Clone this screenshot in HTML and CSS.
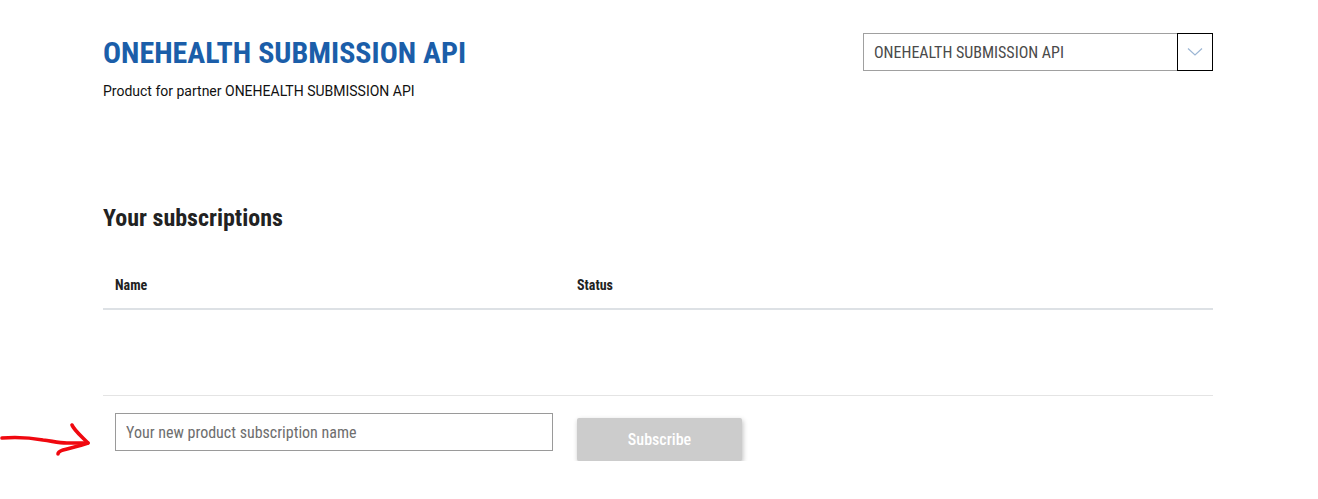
FILE: index.html
```html
<!DOCTYPE html>
<html lang="en">
<head>
<meta charset="utf-8">
<title>ONEHEALTH SUBMISSION API</title>
<link rel="stylesheet" href="styles.css">
</head>
<body>
<div class="page">
  <header class="product-header">
    <div class="product-info">
      <h1 class="product-title">ONEHEALTH SUBMISSION API</h1>
      <p class="product-desc">Product for partner ONEHEALTH SUBMISSION API</p>
    </div>
    <div class="select">
      <span class="select-value">ONEHEALTH SUBMISSION API</span>
      <span class="select-toggle">
        <svg width="16" height="10" viewBox="0 0 16 10"><path d="M1 1.5 L8 8 L15 1.5" fill="none" stroke="#9cb6d4" stroke-width="1.2"/></svg>
      </span>
    </div>
  </header>

  <section class="subscriptions">
    <h2 class="section-title">Your subscriptions</h2>
    <div class="table">
      <div class="table-head">
        <div class="col col-name">Name</div>
        <div class="col col-status">Status</div>
      </div>
      <div class="table-body"></div>
    </div>
    <div class="subscribe-row">
      <svg class="arrow" width="94" height="40" viewBox="0 0 94 40">
        <path d="M2 18 C 15 17, 32 18, 43 20 C 52 21, 58 23, 67 23 C 75 23, 82 23, 88 23" fill="none" stroke="#f0080f" stroke-width="3.6" stroke-linecap="round"/>
        <path d="M72 5 C 74 10, 80 15, 88 23 C 80 26, 70 28, 63 30 C 60 31, 58 32, 58 34" fill="none" stroke="#f0080f" stroke-width="3.6" stroke-linecap="round" stroke-linejoin="round"/>
      </svg>
      <input class="sub-input" type="text" placeholder="Your new product subscription name">
      <button class="sub-button" type="button">Subscribe</button>
    </div>
  </section>
</div>
</body>
</html>
```

FILE: styles.css
```css
* { box-sizing: border-box; }
html, body { margin: 0; padding: 0; background: #fff; }
body {
  font-family: "Roboto Condensed", Roboto, "Liberation Sans", sans-serif;
  color: #222;
}
.page {
  width: 1110px;
  margin-left: 103px;
  padding-top: 33px;
}
.product-header {
  display: flex;
  justify-content: space-between;
  align-items: flex-start;
}
.product-title {
  margin: 0;
  padding-top: 2px;
  font-size: 30px;
  line-height: 36px;
  font-weight: 700;
  color: #1b5ea9;
}
.product-desc {
  margin: 11px 0 0;
  font-family: Roboto, "Liberation Sans", sans-serif;
  font-size: 14px;
  line-height: 18px;
  color: #111;
}
.select {
  width: 350px;
  height: 38px;
  border: 1px solid #a0a0a0;
  display: flex;
  align-items: stretch;
}
.select-value {
  flex: 1;
  display: flex;
  align-items: center;
  padding-left: 10px;
  font-size: 16px;
  color: #4a4a4a;
}
.select-toggle {
  width: 36px;
  margin: -1px -1px -1px 0;
  border: 1px solid #000;
  display: flex;
  align-items: center;
  justify-content: center;
}
.subscriptions { margin-top: 103px; }
.section-title {
  margin: 0;
  font-size: 24px;
  line-height: 30px;
  font-weight: 700;
  color: #222;
}
.table { margin-top: 42px; }
.table-head {
  display: flex;
  height: 35px;
  border-bottom: 2px solid #dde1e5;
  font-size: 14px;
  font-weight: 700;
  color: #222;
}
.col { padding-top: 2px; }
.col-name { width: 474px; padding-left: 12px; }
.col-status { flex: 1; }
.table-body {
  height: 86px;
  border-bottom: 1px solid #e4e4e4;
}
.subscribe-row {
  position: relative;
  display: flex;
  align-items: flex-start;
  padding-top: 17px;
  padding-left: 12px;
}
.arrow {
  position: absolute;
  left: -103px;
  top: 24px;
}
.sub-input {
  width: 438px;
  height: 38px;
  border: 1px solid #9a9a9a;
  padding: 0 10px;
  font-family: "Roboto Condensed", Roboto, sans-serif;
  font-size: 16px;
  color: #333;
  outline: none;
}
.sub-input::placeholder { color: #6e6e6e; }
.sub-button {
  margin-left: 24px;
  margin-top: 5px;
  width: 165px;
  height: 43px;
  border: none;
  border-radius: 2px;
  background: #cccccc;
  color: #fff;
  font-family: "Roboto Condensed", Roboto, sans-serif;
  font-size: 16px;
  font-weight: 500;
  box-shadow: 1px 2px 5px rgba(0,0,0,0.25);
}
```
